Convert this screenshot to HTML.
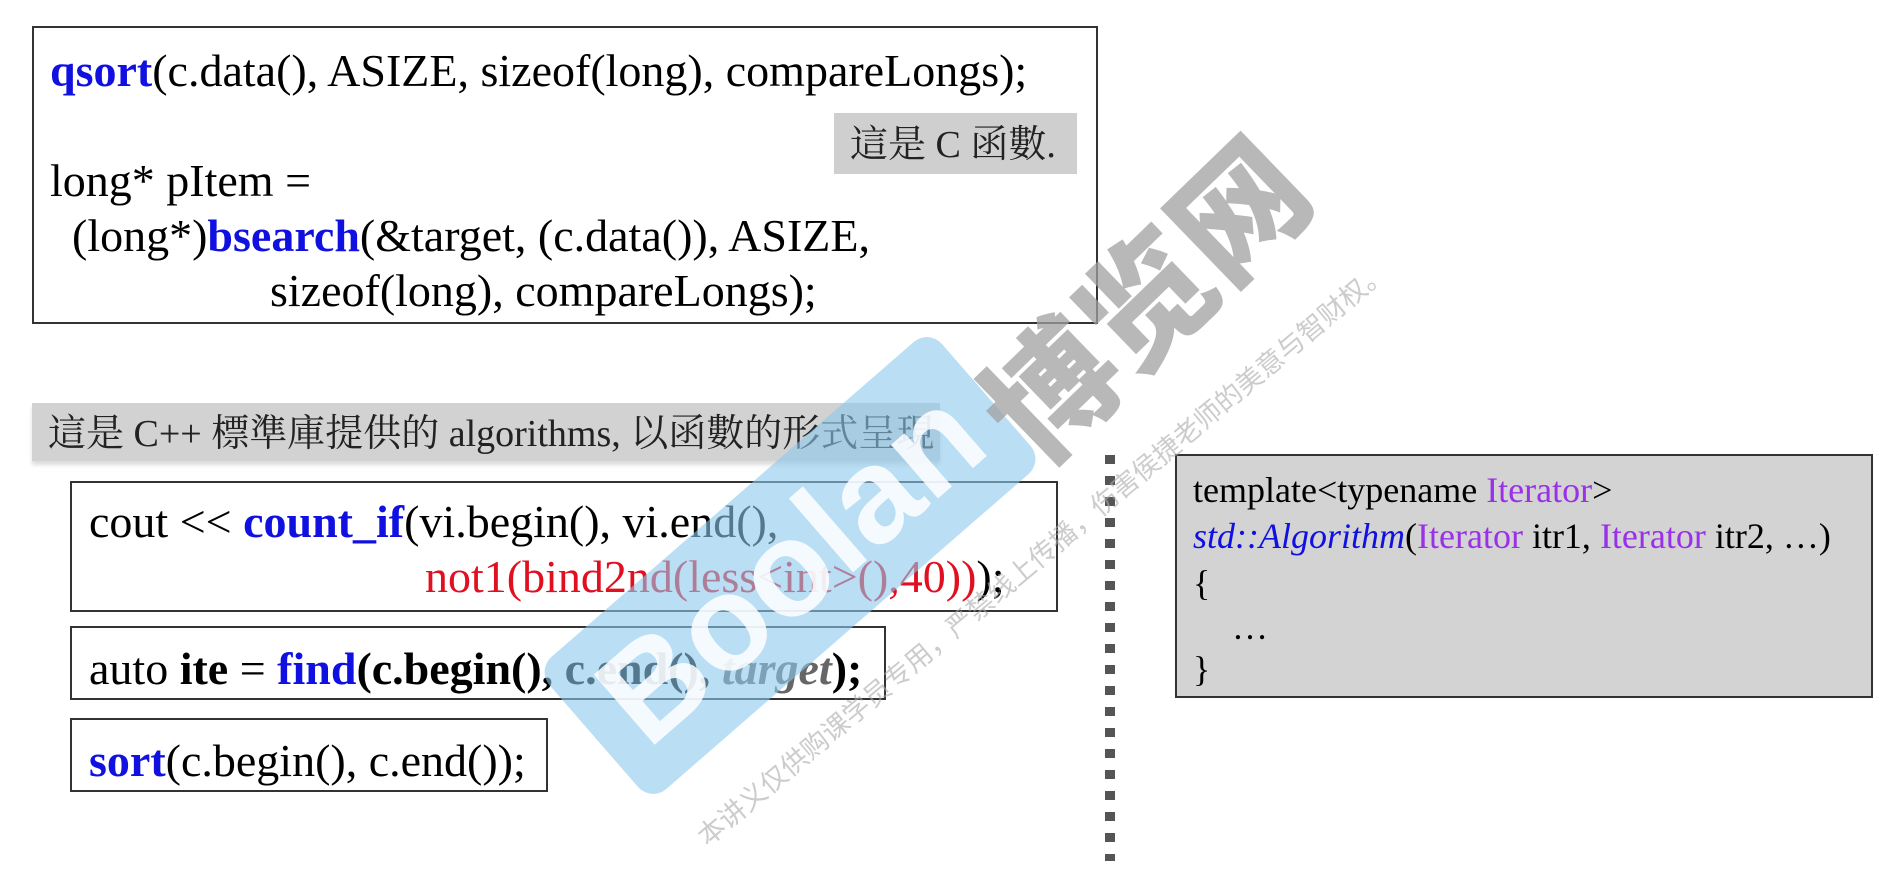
<!DOCTYPE html>
<html><head><meta charset="utf-8"><style>
html,body{margin:0;padding:0;background:#fff;width:1888px;height:878px;overflow:hidden;position:relative}
.t{position:absolute;font-family:"Liberation Serif","Noto Serif CJK SC","Noto Sans CJK TC",serif;color:#000;white-space:nowrap;line-height:1}
.box{position:absolute;border:2px solid #333;background:#fff;box-sizing:border-box}
.b{color:#1010e0;font-weight:bold}
.bl{color:#1010e0}
.r{color:#e01020}
.p{color:#9a30e8}
.wm{position:absolute;white-space:nowrap;line-height:1}
</style></head><body>

<div class="box" style="left:32px;top:26px;width:1066px;height:298px"></div>
<div style="position:absolute;left:834px;top:113px;width:243px;height:61px;background:#cfcfcf"></div>
<div class="t" style="left:850px;top:126px;font-size:38px;color:#222">這是 C 函數.</div>
<div class="t" style="left:50px;top:48px;font-size:46px"><span class="b">qsort</span>(c.data(), ASIZE, sizeof(long), compareLongs);</div>
<div class="t" style="left:50px;top:158px;font-size:46px">long* pItem =</div>
<div class="t" style="left:72px;top:213px;font-size:46px">(long*)<span class="b">bsearch</span>(&amp;target, (c.data()), ASIZE,</div>
<div class="t" style="left:270px;top:268px;font-size:46px">sizeof(long), compareLongs);</div>

<div style="position:absolute;left:32px;top:403px;width:908px;height:58px;background:#d2d2d2;box-shadow:0 4px 4px #ddd"></div>
<div class="t" style="left:48px;top:415px;font-size:38px;color:#222">這是 C++ 標準庫提供的 algorithms, 以函數的形式呈現</div>

<div class="box" style="left:70px;top:481px;width:988px;height:131px"></div>
<div class="t" style="left:89px;top:499px;font-size:46px">cout &lt;&lt; <span class="b">count_if</span>(vi.begin(), vi.end(),</div>
<div class="t" style="left:425px;top:554px;font-size:46px"><span class="r">not1(bind2nd(less&lt;int&gt;(),40))</span>);</div>

<div class="box" style="left:70px;top:626px;width:816px;height:74px"></div>
<div class="t" style="left:89px;top:646px;font-size:46px">auto <b>ite</b> = <span class="b">find</span><b>(c.begin(), c.end(), <i style="color:#666">target</i>);</b></div>

<div class="box" style="left:70px;top:718px;width:478px;height:74px"></div>
<div class="t" style="left:89px;top:738px;font-size:46px"><span class="b">sort</span>(c.begin(), c.end());</div>

<div style="position:absolute;left:1105px;top:455px;width:10px;height:406px;background:repeating-linear-gradient(to bottom,#555 0 9px,transparent 9px 21px)"></div>

<div class="box" style="left:1175px;top:454px;width:698px;height:244px;background:#d3d3d3"></div>
<div class="t" style="left:1193px;top:472px;font-size:36px">template&lt;typename <span class="p">Iterator</span>&gt;</div>
<div class="t" style="left:1193px;top:518px;font-size:36px"><i class="bl">std::Algorithm</i>(<span class="p">Iterator</span> itr1, <span class="p">Iterator</span> itr2, …)</div>
<div class="t" style="left:1193px;top:565px;font-size:36px">{</div>
<div class="t" style="left:1232px;top:609px;font-size:36px">…</div>
<div class="t" style="left:1193px;top:651px;font-size:36px">}</div>

<!-- watermarks -->
<div class="wm" style="left:790px;top:566px;width:520px;height:175px;margin-left:-260px;margin-top:-88px;background:rgba(140,200,235,0.6);transform:rotate(-41deg);border-radius:20px;color:rgba(255,255,255,0.85);font-family:'Liberation Sans',sans-serif;font-size:135px;font-weight:bold;text-align:center;line-height:175px">Boolan</div>
<div class="wm" style="left:1000px;top:365px;font-family:'Noto Sans CJK SC',sans-serif;font-weight:900;font-size:130px;color:rgba(160,160,160,0.75);transform:rotate(-44deg);transform-origin:0 50%">博览网</div>
<div class="wm" style="left:700px;top:825px;font-family:'Noto Sans CJK SC',sans-serif;font-size:27px;color:rgba(170,170,170,0.6);transform:rotate(-40deg);transform-origin:0 50%">本讲义仅供购课学员专用，严禁线上传播，伤害侯捷老师的美意与智财权。</div>
</body></html>
